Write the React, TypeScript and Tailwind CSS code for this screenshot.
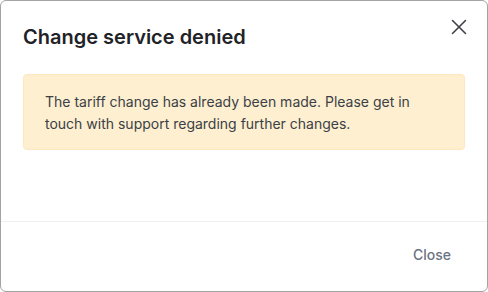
import { X } from "lucide-react";

export default function App() {
  return (
    <div className="w-[488px] h-[292px] bg-white font-['Inter',sans-serif]">
      <div className="relative w-full h-full rounded-md border border-[#a3a3a3] bg-white flex flex-col overflow-hidden">
        <button className="absolute top-[13px] right-[15px] text-[#3f3f46]">
          <X size={26} strokeWidth={1.4} />
        </button>

        <div className="px-[22px] pt-[22px] flex-1">
          <h2 className="text-[20px] leading-[28px] font-semibold text-[#1f2328]">
            Change service denied
          </h2>
          <div className="mt-[23px] rounded-[4px] border border-[#fde7bf] bg-[#feefd0] pl-[21px] pr-4 pt-[16px] pb-[14px]">
            <p className="text-[14px] leading-[22px] text-[#3b3f46]">
              The tariff change has already been made. Please get in touch with support regarding further changes.
            </p>
          </div>
        </div>

        <div className="h-[70px] border-t border-[#f0f0f0] flex items-center justify-end px-[36px] pb-[5px]">
          <button className="text-[14px] font-medium text-[#6b7280]">Close</button>
        </div>
      </div>
    </div>
  );
}
